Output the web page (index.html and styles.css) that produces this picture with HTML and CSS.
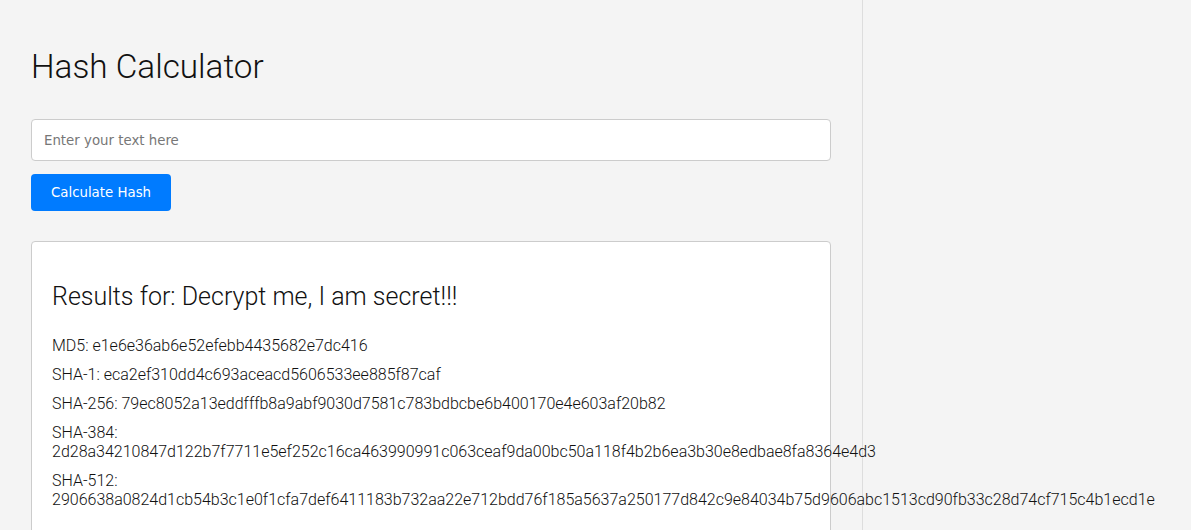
FILE: index.html
```html
<!DOCTYPE html>
<html>
<head>
<meta charset="utf-8">
<link rel="stylesheet" href="styles.css">
</head>
<body>
<div class="layout">
  <main class="main">
    <h1 class="title">Hash Calculator</h1>
    <input class="text-input" type="text" placeholder="Enter your text here">
    <button class="btn">Calculate Hash</button>
    <section class="card">
      <h2 class="card-title">Results for: Decrypt me, I am secret!!!</h2>
      <p class="hash">MD5: e1e6e36ab6e52efebb4435682e7dc416</p>
      <p class="hash">SHA-1: eca2ef310dd4c693aceacd5606533ee885f87caf</p>
      <p class="hash">SHA-256: 79ec8052a13eddfffb8a9abf9030d7581c783bdbcbe6b400170e4e603af20b82</p>
      <p class="hash">SHA-384: 2d28a34210847d122b7f7711e5ef252c16ca463990991c063ceaf9da00bc50a118f4b2b6ea3b30e8edbae8fa8364e4d3</p>
      <p class="hash">SHA-512: 2906638a0824d1cb54b3c1e0f1cfa7def6411183b732aa22e712bdd76f185a5637a250177d842c9e84034b75d9606abc1513cd90fb33c28d74cf715c4b1ecd1e</p>
    </section>
  </main>
  <aside class="side"></aside>
</div>
</body>
</html>
```

FILE: styles.css
```css
html, body {
  margin: 0;
  padding: 0;
  background: #f4f4f4;
  height: 100%;
  overflow: hidden;
}
body {
  font-family: Roboto, "Liberation Sans", sans-serif;
  font-weight: 300;
  color: #111;
}
.layout {
  display: flex;
  height: 100%;
}
.main {
  width: 800px;
  padding: 22px 31px;
  border-right: 1px solid #ddd;
  flex: none;
}
.side {
  flex: 1;
}
.title {
  font-size: 33.3px;
  font-weight: 300;
  margin: 25px 0 33px;
}
.text-input {
  display: block;
  box-sizing: border-box;
  width: 800px;
  height: 42px;
  padding: 0 12px;
  border: 1px solid #ccc;
  border-radius: 4px;
  background: #fff;
  font-family: "DejaVu Sans", sans-serif;
  font-size: 13.33px;
  margin: 0 0 13px;
}
.text-input::placeholder {
  color: #777;
}
.btn {
  display: block;
  width: 140px;
  height: 37px;
  border: none;
  border-radius: 4px;
  background: #007bff;
  color: #fff;
  font-family: "DejaVu Sans", sans-serif;
  font-size: 13.33px;
  padding: 0;
  margin: 0 0 30px;
}
.card {
  background: #fff;
  border: 1px solid #ccc;
  border-radius: 4px;
  padding: 20px;
  height: 400px;
}
.card-title {
  font-size: 25px;
  font-weight: 300;
  margin: 20px 0 25px;
}
.hash {
  font-size: 16px;
  margin: 10px 0;
  line-height: 19px;
}
```
